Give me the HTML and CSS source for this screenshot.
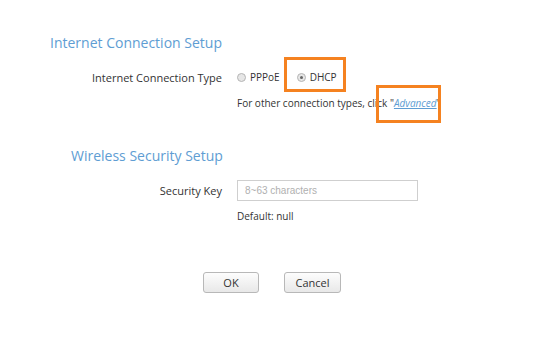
FILE: index.html
```html
<!DOCTYPE html>
<html>
<head>
<title>Quick Setup</title>
<link rel="stylesheet" href="styles.css">
</head>
<body>
<div class="page">

<h2 class="sec-title sec-inet">Internet Connection Setup</h2>

<div class="row row-type">
  <div class="label">Internet Connection Type</div>
  <div class="field">
    <label class="opt"><span class="radio"></span>PPPoE</label>
    <label class="opt opt-dhcp"><span class="radio checked"></span>DHCP</label>
  </div>
</div>

<div class="row row-hint">
  <div class="label"></div>
  <div class="field hint">For other connection types, click "<a href="#" class="adv">Advanced</a>"</div>
</div>

<h2 class="sec-title sec-wifi">Wireless Security Setup</h2>

<div class="row row-key">
  <div class="label">Security Key</div>
  <div class="field"><input type="text" class="key" placeholder="8~63 characters"></div>
</div>

<div class="row row-default">
  <div class="label"></div>
  <div class="field hint">Default: null</div>
</div>

<div class="buttons">
  <button class="btn btn-ok">OK</button>
  <button class="btn btn-cancel">Cancel</button>
</div>

<!-- annotation marks -->
<div class="mark mark-dhcp"></div>
<div class="mark mark-adv"></div>

</div>
</body>
</html>
```

FILE: styles.css
```css
/* Quick setup page */

html, body
{ margin: 0;
padding: 0;
background: #ffffff;
}

body
{ font-family: "Open Sans", "Noto Sans", sans-serif;
color: #333333;
}

div.page
{ position: relative;
width: 551px;
height: 343px;
padding-top: 33px;
box-sizing: border-box;
}

h2.sec-title
{ margin: 0;
font-size: 14px;
font-weight: normal;
line-height: 20px;
color: #5e9dd3;
}

h2.sec-inet
{ margin-left: 50px;
}

h2.sec-wifi
{ margin-top: 36px;
margin-left: 71px;
}

div.row
{ display: flex;
align-items: center;
}

div.label
{ width: 222px;
flex: none;
text-align: right;
font-size: 11px;
}

div.field
{ margin-left: 15px;
display: flex;
align-items: center;
}

div.row-type
{ margin-top: 14px;
height: 20px;
}

div.row-hint
{ margin-top: 9px;
height: 14px;
}

div.row-key
{ margin-top: 14px;
height: 21px;
}

div.row-default
{ margin-top: 8px;
height: 14px;
}

div.hint
{ font-size: 10px;
color: #333333;
}

label.opt
{ display: flex;
align-items: center;
font-size: 10px;
color: #333333;
}

label.opt-dhcp
{ margin-left: 17px;
}

span.radio
{ width: 7px;
height: 7px;
margin-right: 4px;
border: 1px solid #b5b5b5;
border-radius: 50%;
background: #e6e6e6;
position: relative;
}

span.radio.checked::after
{ content: "";
position: absolute;
left: 2px;
top: 2px;
width: 3px;
height: 3px;
border-radius: 50%;
background: #666666;
}

a.adv
{ color: #5e9dd3;
font-style: italic;
text-decoration: underline;
}

input.key
{ width: 181px;
height: 21px;
box-sizing: border-box;
margin: 0;
padding: 0 7px;
border: 1px solid #cfcfcf;
font-family: "Liberation Sans", Arial, sans-serif;
font-size: 10px;
color: #333333;
}

input.key::placeholder
{ color: #b0b0b0;
}

div.buttons
{ margin-top: 49px;
display: flex;
padding-left: 203px;
gap: 25px;
}

button.btn
{ height: 21px;
padding: 0;
border: 1px solid #b8b8b8;
border-radius: 3px;
background: linear-gradient(#fdfdfd, #e8e8e8);
font-family: "Open Sans", "Noto Sans", sans-serif;
font-size: 11px;
color: #333333;
}

button.btn-ok
{ width: 56px;
}

button.btn-cancel
{ width: 57px;
}

/* Orange annotation boxes */

div.mark
{ position: absolute;
border: 3px solid #f58220;
box-sizing: border-box;
}

div.mark-dhcp
{ left: 284px;
top: 57px;
width: 62px;
height: 35px;
}

div.mark-adv
{ left: 376px;
top: 85px;
width: 65px;
height: 38px;
}
```
